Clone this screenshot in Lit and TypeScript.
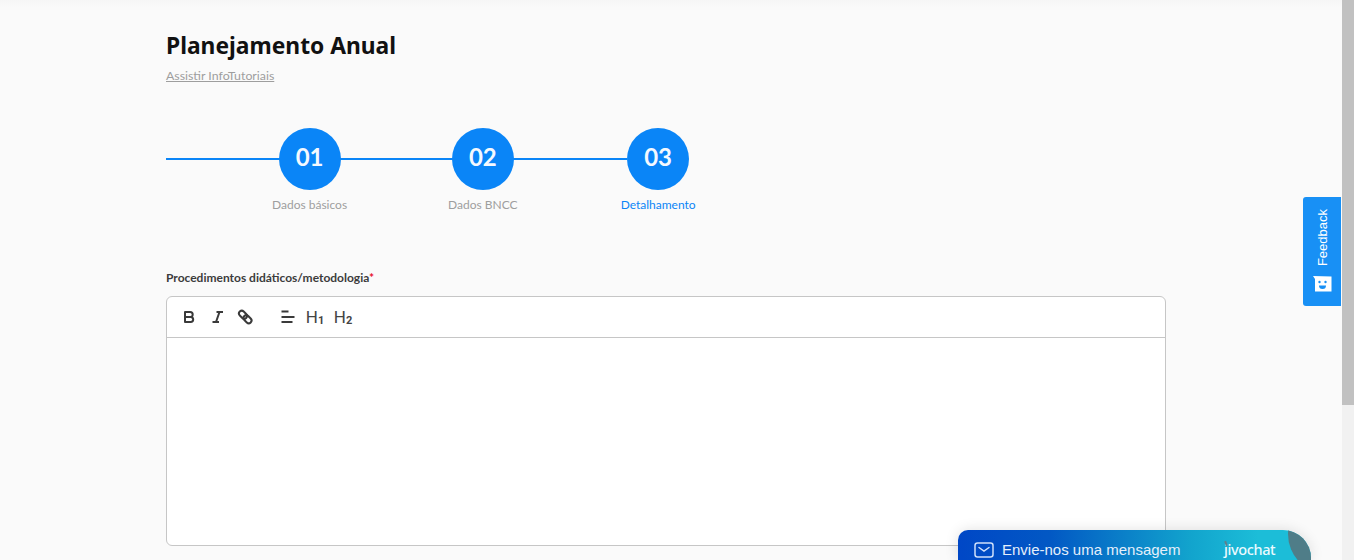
import { LitElement, html, css, svg } from "lit";
import { customElement } from "lit/decorators.js";

@customElement("app-root")
export class AppRoot extends LitElement {
  static styles = css`
    :host { display: block; height: 560px; overflow: hidden; position: relative; background: #fafafa; font-family: "Lato", sans-serif; }
    .page { display: flex; height: 560px; }
    .main { flex: 1; padding: 31px 0 0 166px; box-sizing: border-box; min-width: 0; }
    .bar { width: 12px; background: #f1f1f1; flex: none; }
    .thumb { height: 405px; background: #c1c1c1; }
    .topshade { position: absolute; left: 0; top: 0; right: 12px; height: 8px; background: linear-gradient(#f6f6f6, #fafafa); }
    h1 { margin: 0; font: 700 22.8px/29px "Noto Sans", sans-serif; color: #111; }
    .tut { display: block; margin-top: 8px; font-size: 12.35px; line-height: 15px; color: #9e9e9e; text-decoration: underline; }
    .stepper { position: relative; display: flex; gap: 101px; padding-left: 106px; margin-top: 45px; width: fit-content; }
    .line { position: absolute; left: 0; top: 30px; height: 2px; width: 461px; background: #0a85f7; }
    .step { position: relative; display: flex; flex-direction: column; align-items: center; }
    .step:last-child { margin-left: 2px; }
    .circle { width: 62px; height: 62px; border-radius: 50%; background: #0a85f7; color: #f4f9ff; display: flex; align-items: center; justify-content: center; padding-bottom: 5px; box-sizing: border-box; font-size: 24px; font-weight: 700; }
    .lbl { margin-top: 7px; font-size: 12px; line-height: 15px; color: #9e9e9e; white-space: nowrap; }
    .step.on .lbl { color: #0a85f7; }
    .field { margin-top: 58px; font-size: 12px; line-height: 15px; font-weight: 700; color: #3c3c3c; }
    .field span { color: #e8102c; }
    .editor { margin-top: 11px; width: 1000px; height: 250px; box-sizing: border-box; border: 1px solid #c6c6c6; border-radius: 6px; background: #fff; }
    .tools { height: 40px; border-bottom: 1px solid #c6c6c6; display: flex; align-items: center; padding-left: 14px; color: #3a3a3a; }
    .tools svg { display: block; flex: none; }
    .h { width: 28px; font: 400 17px/20px "Roboto", sans-serif; color: #444; text-align: center; flex: none; }
    .h sub { font-size: 11px; font-weight: 700; line-height: 0; vertical-align: -1px; }
    .feedback { position: absolute; left: 1303px; top: 197px; width: 38px; height: 109px; background: #1890f5; border-radius: 3px 0 0 3px; display: flex; flex-direction: column; align-items: center; justify-content: flex-end; gap: 10px; padding: 0 0 14px 1px; box-sizing: border-box; }
    .feedback b { writing-mode: vertical-rl; transform: rotate(180deg); font: 400 13px/16px "Liberation Sans", sans-serif; color: #fff; }
    .chat { position: absolute; left: 958px; top: 530px; width: 353px; height: 30px; border-radius: 10px 28px 0 0; overflow: hidden; background: linear-gradient(90deg, #0047c6, #0258c4 26%, #12a4cd 66%, #1cbdd8 85%); box-shadow: 0 0 14px rgba(0,0,0,.12); display: flex; align-items: center; padding: 10px 0 0 16px; box-sizing: border-box; color: #e4effb; }
    .chat .msg { margin-left: 8px; font: 400 15px/18px "Liberation Sans", sans-serif; }
    .chat .logo { position: absolute; left: 266px; top: 10px; font: 500 14.5px/18px "Noto Sans", sans-serif; letter-spacing: -0.4px; color: #eafaff; }
    .chat .tick { position: absolute; left: 267px; top: 11px; width: 2px; height: 5px; background: #5f7f8c; transform: rotate(-20deg); }
    .chat .corner { position: absolute; left: 330px; top: -36px; width: 80px; height: 80px; border-radius: 50%; background: #4f7d88; }
  `;

  private icon(w: number, body: unknown) {
    return html`<svg width=${w} height="18" viewBox="0 0 ${w} 18" fill="none" stroke="currentColor" stroke-width="2" stroke-linecap="round" stroke-linejoin="round">${body}</svg>`;
  }

  render() {
    const steps = [["01", "Dados básicos"], ["02", "Dados BNCC"], ["03", "Detalhamento"]];
    return html`
      <div class="page">
        <div class="main">
          <h1>Planejamento Anual</h1>
          <a class="tut">Assistir InfoTutoriais</a>
          <div class="stepper">
            <div class="line"></div>
            ${steps.map(([n, l], i) => html`<div class="step ${i === 2 ? "on" : ""}"><div class="circle">${n}</div><div class="lbl">${l}</div></div>`)}
          </div>
          <div class="field">Procedimentos didáticos/metodologia<span>*</span></div>
          <div class="editor">
            <div class="tools">
              ${this.icon(28, svg`<path stroke-width="2" d="M4 4h5.200a2.500 2.500 0 0 1 0 5H4zM4 9h5.700a2.500 2.500 0 0 1 0 5H4z"/>`)}
              ${this.icon(28, svg`<path d="M7.500 4h6.500M3.500 14h6.500M10.500 4 7 14" stroke-width="2" stroke-linecap="butt"/>`)}
              ${this.icon(40, svg`<g stroke-width="2"><rect x="1.500" y="4" width="9" height="5.500" rx="2.750" transform="rotate(45 6 6.750)"/><rect x="6" y="8.500" width="9" height="5.500" rx="2.750" transform="rotate(45 10.500 11.250)"/></g>`)}
              ${this.icon(24, svg`<path d="M4.500 3.500h7M4.500 9h13M4.500 14h11" stroke-width="1.800" stroke-linecap="butt"/>`)}
              <div class="h">H<sub>1</sub></div>
              <div class="h">H<sub>2</sub></div>
            </div>
          </div>
        </div>
        <div class="bar"><div class="thumb"></div></div>
      </div>
      <div class="topshade"></div>
      <div class="feedback">
        <b>Feedback</b>
        <svg width="19" height="16" viewBox="0 0 19 16"><path d="M0 0l18.500 .5V15.500H2V3z" fill="#fff"/><circle cx="6.500" cy="6" r="1.200" fill="#1890f5"/><circle cx="12.500" cy="6" r="1.200" fill="#1890f5"/><path d="M6 9.500h7a3.500 3.500 0 0 1-7 0z" fill="#1890f5"/></svg>
      </div>
      <div class="chat">
        <svg width="20" height="16" viewBox="0 0 20 16" fill="none" stroke="#cfe0fa" stroke-width="1.500"><rect x="1" y="1" width="18" height="14" rx="2.500"/><path d="M5 5.500l5 3.500 5-3.500" stroke-linecap="round"/></svg>
        <span class="msg">Envie-nos uma mensagem</span>
        <span class="logo">jivochat</span>
        <span class="tick"></span>
        <div class="corner"></div>
      </div>
    `;
  }
}
